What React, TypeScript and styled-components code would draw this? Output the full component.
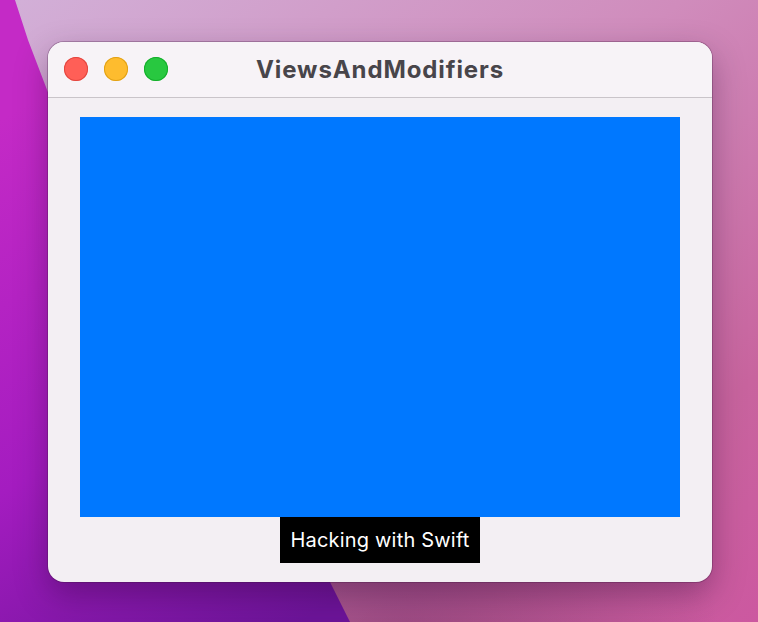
import React from 'react'
import styled, { createGlobalStyle } from 'styled-components'

const GlobalStyle = createGlobalStyle`
  html, body {
    margin: 0;
    padding: 0;
    width: 758px;
    height: 622px;
    overflow: hidden;
    background: #b43ab8;
  }
  * {
    box-sizing: border-box;
  }
`

const Desktop = styled.div`
  position: relative;
  width: 758px;
  height: 622px;
  padding: 42px 0 0 48px;
`

const Wallpaper = styled.svg`
  position: absolute;
  inset: 0;
  width: 758px;
  height: 622px;
  z-index: 0;
`

const Window = styled.div`
  position: relative;
  z-index: 1;
  width: 664px;
  height: 540px;
  border-radius: 16px;
  overflow: hidden;
  background: #f3eff3;
  display: flex;
  flex-direction: column;
  box-shadow: 0 0 0 1px rgba(60, 20, 60, 0.28), 0 12px 32px rgba(40, 0, 50, 0.35);
`

const TitleBar = styled.div`
  height: 56px;
  flex-shrink: 0;
  background: #f7f3f7;
  border-bottom: 1px solid #c9c4c9;
  display: grid;
  grid-template-columns: 1fr auto 1fr;
  align-items: center;
  padding: 0 16px 1px;
`

const Lights = styled.div`
  display: flex;
  gap: 16px;
`

const Light = styled.span<{ $fill: string; $edge: string }>`
  width: 24px;
  height: 24px;
  border-radius: 50%;
  background: ${p => p.$fill};
  box-shadow: inset 0 0 0 1px ${p => p.$edge};
`

const Title = styled.div`
  font-family: Inter, 'Noto Sans', sans-serif;
  font-weight: 700;
  font-size: 24px;
  color: #48454a;
  letter-spacing: 0.9px;
`

const Content = styled.div`
  flex: 1;
  display: flex;
  flex-direction: column;
  align-items: center;
  padding: 19px 32px;
`

const BlueBox = styled.div`
  width: 600px;
  height: 400px;
  background: #0078ff;
`

const Caption = styled.div`
  width: 200px;
  height: 46px;
  background: #000;
  color: #fff;
  font-family: Inter, 'Noto Sans', sans-serif;
  font-size: 20px;
  letter-spacing: 0.2px;
  display: flex;
  align-items: center;
  justify-content: center;
`

export default function App() {
  return (
    <>
      <GlobalStyle />
      <Desktop>
        <Wallpaper viewBox="0 0 758 622" preserveAspectRatio="none">
          <defs>
            <linearGradient id="light" x1="0" y1="0" x2="1" y2="1">
              <stop offset="0" stopColor="#d2b0d8" />
              <stop offset="0.45" stopColor="#d08cbc" />
              <stop offset="0.8" stopColor="#c8649e" />
              <stop offset="1" stopColor="#cc58a0" />
            </linearGradient>
            <radialGradient id="shade" gradientUnits="userSpaceOnUse" cx="400" cy="650" r="320">
              <stop offset="0" stopColor="#6a2860" stopOpacity="0.5" />
              <stop offset="1" stopColor="#6a2860" stopOpacity="0" />
            </radialGradient>
            <linearGradient id="deep" gradientUnits="userSpaceOnUse" x1="0" y1="120" x2="300" y2="622">
              <stop offset="0" stopColor="#c42ac6" />
              <stop offset="0.55" stopColor="#a41cc0" />
              <stop offset="1" stopColor="#6c1498" />
            </linearGradient>
          </defs>
          <rect width="758" height="622" fill="url(#light)" />
          <rect width="758" height="622" fill="url(#shade)" />
          <polygon points="0,0 15,0 28,40 70,150 330,582 350,622 0,622" fill="url(#deep)" />
        </Wallpaper>
        <Window>
          <TitleBar>
            <Lights>
              <Light $fill="#ff5f57" $edge="#e2463f" />
              <Light $fill="#febc2e" $edge="#e1a116" />
              <Light $fill="#28c840" $edge="#14ae2b" />
            </Lights>
            <Title>ViewsAndModifiers</Title>
            <span />
          </TitleBar>
          <Content>
            <BlueBox />
            <Caption>Hacking with Swift</Caption>
          </Content>
        </Window>
      </Desktop>
    </>
  )
}
